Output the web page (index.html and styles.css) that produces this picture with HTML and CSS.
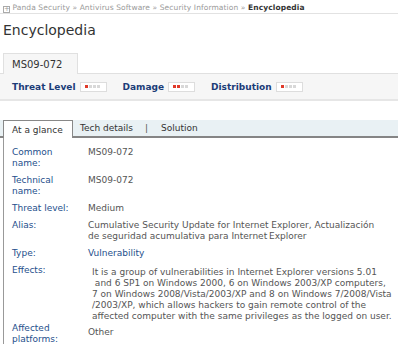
FILE: index.html
```html
<!DOCTYPE html>
<html lang="en">
<head>
    <meta charset="UTF-8">
    <title>Encyclopedia - MS09-072</title>
    <link rel="stylesheet" href="styles.css">
</head>
<body>
    <div class="breadcrumb">
        <span class="crumb-icon">+</span>
        <a href="#">Panda Security</a> &raquo;
        <a href="#">Antivirus Software</a> &raquo;
        <a href="#">Security Information</a> &raquo;
        <span class="current">Encyclopedia</span>
    </div>

    <h1 class="page-title">Encyclopedia</h1>

    <div class="threat-box">
        <div class="threat-tab">MS09-072</div>
        <div class="threat-bar">
            <span class="threat-item">Threat Level
                <span class="meter"><i class="on"></i><i></i><i></i><i></i></span>
            </span>
            <span class="threat-item">Damage
                <span class="meter"><i class="on"></i><i class="on"></i><i></i><i></i></span>
            </span>
            <span class="threat-item">Distribution
                <span class="meter"><i class="on"></i><i></i><i></i><i></i></span>
            </span>
        </div>
    </div>

    <div class="tabs">
        <span class="tab active">At a glance</span>
        <span class="tab">Tech details</span>
        <span class="tab-sep">|</span>
        <span class="tab">Solution</span>
    </div>

    <div class="details">
        <div class="row">
            <div class="label">Common name:</div>
            <div class="value">MS09-072</div>
        </div>
        <div class="row">
            <div class="label">Technical name:</div>
            <div class="value">MS09-072</div>
        </div>
        <div class="row">
            <div class="label">Threat level:</div>
            <div class="value">Medium</div>
        </div>
        <div class="row">
            <div class="label">Alias:</div>
            <div class="value">Cumulative Security Update for Internet Explorer, Actualización<br>de seguridad acumulativa para Internet&thinsp;Explorer</div>
        </div>
        <div class="row">
            <div class="label">Type:</div>
            <div class="value link">Vulnerability</div>
        </div>
        <div class="row tight">
            <div class="label">Effects:</div>
            <div class="value effects">It is a group of vulnerabilities in Internet Explorer versions 5.01<br>
                &nbsp;and 6 SP1 on Windows 2000, 6 on Windows 2003/XP computers,<br>
                7 on Windows 2008/Vista/2003/XP and 8 on Windows 7/2008/Vista<br>
                /2003/XP, which allows hackers to gain remote control of the<br>
                affected computer with the same privileges as the logged on user.</div>
        </div>
        <div class="row">
            <div class="label">Affected platforms:</div>
            <div class="value low">Other</div>
        </div>
    </div>
</body>
</html>
```

FILE: styles.css
```css
* {
    margin: 0;
    padding: 0;
    box-sizing: border-box;
}

body {
    font-family: "DejaVu Sans", Verdana, sans-serif;
    background: #ffffff;
    color: #555;
    width: 398px;
    overflow: hidden;
}

a {
    text-decoration: none;
    color: inherit;
}

.breadcrumb {
    font-size: 7.5px;
    letter-spacing: 0.1px;
    color: #9a9a9a;
    padding: 3px 3px 2px;
    border-bottom: 1px solid #e2e2e2;
    height: 14px;
    white-space: nowrap;
}

.crumb-icon {
    display: inline-block;
    width: 7px;
    height: 7px;
    border: 1px solid #aaa;
    font-size: 7px;
    line-height: 5px;
    text-align: center;
    letter-spacing: 0;
    vertical-align: -1px;
}

.breadcrumb .current {
    color: #333;
    font-weight: bold;
}

.page-title {
    font-size: 14px;
    font-weight: normal;
    color: #333;
    margin: 8px 3px 0;
    height: 30px;
}

.threat-tab {
    margin-left: 3px;
    width: 75px;
    height: 21px;
    border: 1px solid #e0e0e0;
    border-bottom: none;
    background: #f6f6f6;
    font-size: 10px;
    color: #333;
    padding: 5px 0 0 8px;
    position: relative;
    top: 1px;
}

.threat-bar {
    display: flex;
    align-items: center;
    gap: 16px;
    height: 28px;
    background: #f6f6f6;
    border-top: 1px solid #e0e0e0;
    border-bottom: 2px solid #e6e6e6;
    padding-left: 12px;
}

.threat-item {
    display: flex;
    align-items: center;
    gap: 4px;
    font-size: 9px;
    font-weight: bold;
    color: #1b3c78;
}

.meter {
    display: flex;
    gap: 1px;
    align-items: center;
    width: 27px;
    height: 10px;
    border: 1px solid #ddd;
    background: #fff;
    padding-left: 4px;
}

.meter i {
    width: 3px;
    height: 3px;
    background: #d8d8d8;
}

.meter i.on {
    background: #e03a2a;
}

.tabs {
    display: flex;
    align-items: center;
    margin-top: 19px;
    height: 18px;
    background: #e9f1f4;
    border-bottom: 2px solid #858585;
    font-size: 9px;
    color: #333;
}

.tab {
    padding: 0 12px 0 7px;
}

.tab:last-child {
    padding-left: 13px;
}

.tab.active {
    align-self: stretch;
    display: flex;
    align-items: center;
    margin-left: 3px;
    margin-bottom: -2px;
    width: 70px;
    padding: 0 8px;
    background: #fff;
    border: 1px solid #888;
    border-bottom: none;
}

.tab-sep {
    color: #555;
}

.details {
    margin-left: 3px;
    border-left: 1px solid #999;
    padding: 9px 0 10px 8px;
    font-size: 9px;
    line-height: 11px;
}

.row {
    display: flex;
    margin-bottom: 6px;
}

.row.tight {
    margin-bottom: 1px;
}

.label {
    width: 76px;
    color: #254f8c;
    flex-shrink: 0;
    padding-right: 13px;
}

.value {
    flex: 1;
    color: #555;
}

.value.link {
    color: #254f8c;
}

.value.effects {
    padding-top: 2px;
    padding-left: 4px;
}

.value.low {
    padding-top: 4px;
}
```
